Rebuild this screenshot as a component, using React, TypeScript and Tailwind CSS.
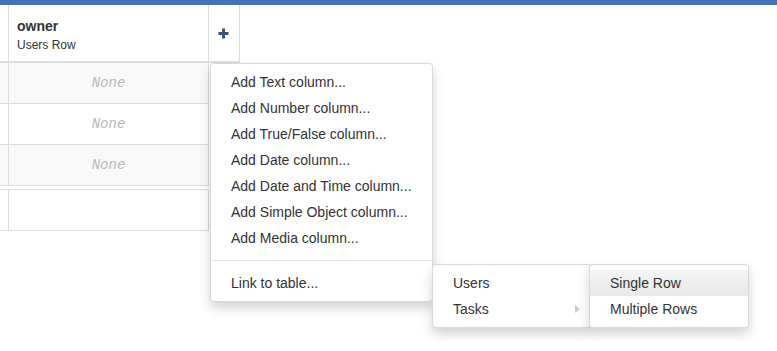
import React from "react";

const columnItems = [
  "Add Text column...",
  "Add Number column...",
  "Add True/False column...",
  "Add Date column...",
  "Add Date and Time column...",
  "Add Simple Object column...",
  "Add Media column...",
];

const menuBox =
  "absolute bg-white border border-[rgba(0,0,0,0.15)] rounded-[4px] shadow-[0_6px_12px_rgba(0,0,0,0.175)] py-[5px]";

const Row = ({ striped }: { striped: boolean }) => (
  <div className={`flex w-[209px] h-[41px] border-b border-[#dddddd] ${striped ? "bg-[#f9f9f9]" : "bg-white"}`}>
    <div className="w-[9px] border-r border-[#dddddd]" />
    <div className="w-[200px] border-r border-[#dddddd] flex items-center justify-center">
      <span className="font-['Liberation_Mono',monospace] italic text-[14px] text-[#b8b8b8]">None</span>
    </div>
  </div>
);

const App = () => {
  return (
    <div className="relative w-[777px] h-[351px] bg-white overflow-hidden font-['Liberation_Sans',Arial,sans-serif] text-[#333333]">
      <div className="h-[5px] bg-[#3f73b3]" />

      <div className="flex">
        <div className="w-[9px] h-[58px] border-r border-b-2 border-[#dddddd]" />
        <div className="w-[200px] h-[58px] border-r border-b-2 border-[#dddddd] pl-[8px] pt-[11px]">
          <div className="text-[14px] leading-[20px] font-bold">owner</div>
          <div className="text-[12px] leading-[18px]">Users Row</div>
        </div>
        <div className="w-[31px] h-[58px] border-r border-b-2 border-[#dddddd] flex items-center justify-center">
          <svg width="11" height="11" viewBox="0 0 11 11" className="mr-[2px]">
            <path d="M5.5 0.5v10M0.5 5.5h10" stroke="#34557a" strokeWidth="3" />
          </svg>
        </div>
      </div>

      <Row striped />
      <Row striped={false} />
      <Row striped />
      <div className="h-[3px]" />
      <div className="flex w-[209px] h-[42px] border-y border-[#dddddd]">
        <div className="w-[9px] border-r border-[#dddddd]" />
        <div className="w-[200px] border-r border-[#dddddd]" />
      </div>

      <div className={`${menuBox} left-[210px] top-[63px] w-[223px]`}>
        {columnItems.map((item) => (
          <div key={item} className="px-[20px] h-[26px] leading-[26px] text-[14px]">
            {item}
          </div>
        ))}
        <div className="h-px bg-[#e5e5e5] my-[9px]" />
        <div className="px-[20px] h-[26px] leading-[26px] text-[14px]">Link to table...</div>
      </div>

      <div className={`${menuBox} left-[432px] top-[264px] w-[159px]`}>
        <div className="px-[20px] h-[26px] leading-[26px] text-[14px]">Users</div>
        <div className="px-[20px] h-[26px] leading-[26px] text-[14px] flex items-center justify-between">
          <span>Tasks</span>
          <span className="w-0 h-0 border-y-[4px] border-y-transparent border-l-[5px] border-l-[#cccccc] -mr-[10px]" />
        </div>
      </div>

      <div className={`${menuBox} left-[589px] top-[264px] w-[160px]`}>
        <div className="px-[20px] h-[26px] leading-[26px] text-[14px] bg-gradient-to-b from-[#f5f5f5] to-[#e8e8e8]">
          Single Row
        </div>
        <div className="px-[20px] h-[26px] leading-[26px] text-[14px]">Multiple Rows</div>
      </div>
    </div>
  );
};

export default App;
